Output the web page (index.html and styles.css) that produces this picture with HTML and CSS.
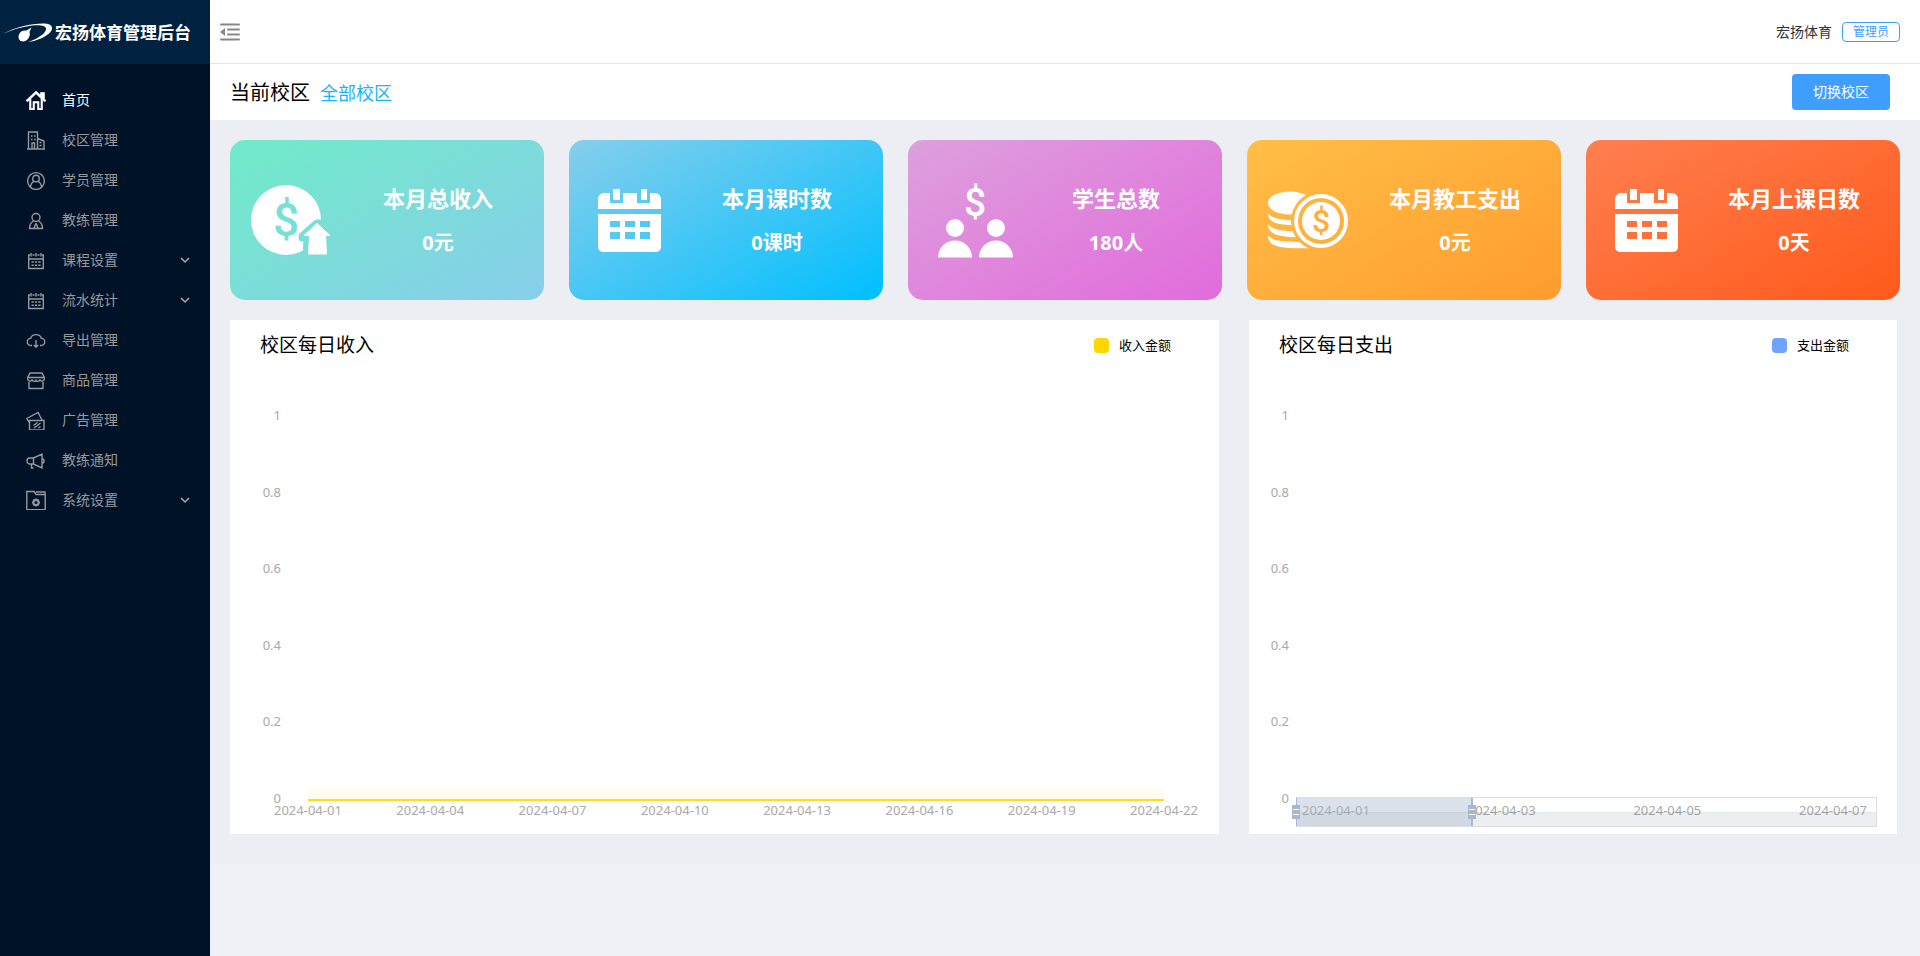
FILE: index.html
```html
<!DOCTYPE html>
<html lang="zh-CN">
<head>
<meta charset="utf-8">
<meta name="viewport" content="width=device-width, initial-scale=1">
<title>宏扬体育管理后台</title>
<link rel="stylesheet" href="styles.css">
</head>
<body>
<svg class="sprite" aria-hidden="true">
  <symbol id="calendar-small" viewBox="0 0 20 20">
    <path d="M4 5H2.700V18.500H17.300V5H16M6.500 5h2M11.500 5h2M5 3v3.500M10 3v3.500M15 3v3.500M3 9h14M5.500 12h2.300M8.900 12h2.300M12.300 12h2.300M5.500 15.300h2.300M8.900 15.300h2.300M12.300 15.300h2.300"/>
  </symbol>
  <symbol id="chevron" viewBox="0 0 10 10">
    <path d="M1 3l4 4 4-4"/>
  </symbol>
  <symbol id="calendar-large" viewBox="0 0 64 64">
    <path d="M6 4h6v10h13V4h14v10h13V4h5a6 6 0 0 1 6 6v10H0V10a6 6 0 0 1 6-6zM15 0h7v11h-7zM43 0h6v11h-6z"/>
    <path fill-rule="evenodd" d="M0 25h63v33a5 5 0 0 1-5 5H5a5 5 0 0 1-5-5zM12 32v6h10v-6zM27 32v6h10v-6zM42 32v6h10v-6zM12 43v7h10v-7zM27 43v7h10v-7zM42 43v7h10v-7z"/>
  </symbol>
</svg>
<div class="app">
  <aside class="sidebar">
    <div class="brand">
      <svg class="brand-logo" viewBox="0 0 50 20" aria-hidden="true">
        <path fill="#fff" d="M0 11C12 4 30 0 42 0.500C50 1 51 6 46 10.500C41 15 33 18 25 19C34 16 42 11 43 6.500C44 2.500 37 1.500 29 2.500C18 4 8 7 0 11z"/>
        <path fill="#fff" d="M16 11.500C17 8.500 20 7 23.500 7.500L28.500 4.500L26.500 9C28 13.500 24 18.500 20 18.500C16.500 18.500 14.500 15 16 11.500z"/>
      </svg>
      <h1 class="brand-name">宏扬体育管理后台</h1>
    </div>
    <nav class="menu">
      <a class="menu-item active" href="#">
        <svg class="menu-icon solid" viewBox="0 0 20 20"><path fill-rule="evenodd" d="M10 1L0 10.500l1.500 1.300L3.500 10v10h5v-7h3v7h5V10l2 1.800L20 10.500l-1.500-1.500V2.500h-4V5zM10 3.800l5 4.800V18.500H13v-7H7v7H5V8.600z"/></svg>
        <span>首页</span></a>
      <a class="menu-item" href="#">
        <svg class="menu-icon" viewBox="0 0 20 20"><path d="M1 19h18M2.500 19V2h9v17M11.500 8.500l6.500 2.500v8M5 6h1.500M8 6h1.500M5 9.500h1.500M8 9.500h1.500M6 19v-6h2.500v6M13.500 12.500h2M13.500 15.500h2"/></svg>
        <span>校区管理</span></a>
      <a class="menu-item" href="#">
        <svg class="menu-icon" viewBox="0 0 20 20"><circle cx="10" cy="11" r="8.400"/><circle cx="10" cy="8.500" r="3.300"/><path d="M4.500 17c.3-3 1.600-5 3.700-5.700M15.500 17c-.3-3-1.600-5-3.700-5.700"/></svg>
        <span>学员管理</span></a>
      <a class="menu-item" href="#">
        <svg class="menu-icon" viewBox="0 0 20 20"><circle cx="10" cy="7.500" r="4"/><path d="M7.500 11C5 12.500 3.500 15 3.500 18.500h13c0-3.500-1.500-6-4-7.500M8.200 18l1.300-4h1l1.300 4"/></svg>
        <span>教练管理</span></a>
      <button class="menu-item" type="button">
        <svg class="menu-icon"><use href="#calendar-small"/></svg>
        <span>课程设置</span>
        <svg class="menu-arrow"><use href="#chevron"/></svg></button>
      <button class="menu-item" type="button">
        <svg class="menu-icon"><use href="#calendar-small"/></svg>
        <span>流水统计</span>
        <svg class="menu-arrow"><use href="#chevron"/></svg></button>
      <a class="menu-item" href="#">
        <svg class="menu-icon" viewBox="0 0 20 20"><path d="M6 15.500H5a3.600 3.600 0 0 1-.3-7.200a5.500 5 0 0 1 10.600 0A3.600 3.600 0 0 1 15 15.500h-1M10 10v7M7.800 15l2.200 2.200 2.200-2.200"/></svg>
        <span>导出管理</span></a>
      <a class="menu-item" href="#">
        <svg class="menu-icon" viewBox="0 0 20 20"><path d="M4 3h12l2.300 4.500v1.500c0 2.500-4 3-4.300.5c-.5 2.500-4 2.500-4 0c0 2.500-3.500 2.500-4 0c-.3 2.500-4.300 2-4.300-.5V7.500zM2 7.500h16M3 12V18.500h14v-6.500"/></svg>
        <span>商品管理</span></a>
      <a class="menu-item" href="#">
        <svg class="menu-icon" viewBox="0 0 20 20"><path d="M3.500 10.500h14.500V20H3.500zM3.500 13L.8 8.500L12 2.500L16 10M7.500 15.500l4-3M8 18l6.500-5M12.500 18l2-1.500"/></svg>
        <span>广告管理</span></a>
      <a class="menu-item" href="#">
        <svg class="menu-icon" viewBox="0 0 20 20"><path d="M7.500 8H3.500a2.500 3 0 0 0 0 6h4l8.500 4V4zM7.500 8v6M16.500 9c2 0 2 4 0 4M5.500 14v4h2"/></svg>
        <span>教练通知</span></a>
      <button class="menu-item" type="button">
        <svg class="menu-icon" viewBox="0 0 20 20"><path d="M.8 1.500H8l2 3h9.200v15.200H.8zM10 2h9V4.500"/><circle cx="10" cy="12.500" r="2.500" stroke-width="1.800"/><path stroke-width="1.800" d="M10 8.500v1.500M10 15v1.500M6 12.500h1.500M12.500 12.500H14M7.200 9.700l1 1M11.800 14.300l1 1M7.200 15.300l1-1M11.800 10.700l1-1"/></svg>
        <span>系统设置</span>
        <svg class="menu-arrow"><use href="#chevron"/></svg></button>
    </nav>
  </aside>

  <div class="page">
    <header class="topbar">
      <button class="fold" type="button" aria-label="收起菜单">
        <svg viewBox="0 0 20 18"><path d="M1 1.500h18M8 6.500h11M8 11.500h11M1 16.500h18"/><path class="fold-arrow" d="M0 9l5-4v8z"/></svg>
      </button>
      <div class="account"><span>宏扬体育</span><span class="role">管理员</span></div>
    </header>
    <section class="campus">
      <div class="campus-label"><span>当前校区</span><a class="campus-name" href="#">全部校区</a></div>
      <button class="switch" type="button">切换校区</button>
    </section>

    <main class="content">
      <section class="cards">
        <article class="card income">
          <svg class="card-icon" viewBox="0 0 82 82">
            <mask id="coin"><rect width="82" height="82" fill="#fff"/><path d="M67 44L52 57v2h5l-1 22h26V44z" fill="#000" stroke="#000" stroke-width="7" stroke-linejoin="round"/></mask>
            <circle cx="36" cy="41" r="35" mask="url(#coin)"/>
            <text class="coin-mark" x="36" y="57" font-size="46">$</text>
            <path d="M67 44.500L80 56.500h-4.500l1 18.500H58.500l1-18.500H54z" stroke="#fff" stroke-linejoin="round"/>
          </svg>
          <div class="card-text"><h2>本月总收入</h2><p>0元</p></div>
        </article>
        <article class="card lessons">
          <svg class="card-icon" viewBox="-9 -10 82 82"><use href="#calendar-large" width="64" height="64"/></svg>
          <div class="card-text"><h2>本月课时数</h2><p>0课时</p></div>
        </article>
        <article class="card students">
          <svg class="card-icon" viewBox="0 0 82 82">
            <text x="47" y="37" font-size="39">$</text>
            <circle cx="27" cy="49" r="9"/><circle cx="68" cy="49" r="9"/>
            <path d="M10 78.500a17 17 0 0 1 34 0zM51 78.500a17 17 0 0 1 34 0z"/>
          </svg>
          <div class="card-text"><h2>学生总数</h2><p>180人</p></div>
        </article>
        <article class="card payroll">
          <svg class="card-icon" viewBox="0 0 82 82">
            <mask id="stack"><rect width="82" height="82" fill="#fff"/><circle cx="54" cy="42" r="30" fill="#000"/></mask>
            <g mask="url(#stack)">
              <ellipse cx="23" cy="24" rx="22" ry="11.500"/>
              <path d="M1 34C5 40 14 42 48 41V46C15 47 1 46 1 34zM1 45C5 51 14 53 48 52V58C15 59 1 57 1 45zM1 56C5 62 14 63 48 63V69C12 70 1 68 1 56z"/>
            </g>
            <circle cx="54" cy="42" r="25" fill="none" stroke="#fff" stroke-width="4"/>
            <circle cx="54" cy="42" r="19"/>
            <text class="coin-mark" x="54" y="53" font-size="32">$</text>
          </svg>
          <div class="card-text"><h2>本月教工支出</h2><p>0元</p></div>
        </article>
        <article class="card days">
          <svg class="card-icon" viewBox="-9 -10 82 82"><use href="#calendar-large" width="64" height="64"/></svg>
          <div class="card-text"><h2>本月上课日数</h2><p>0天</p></div>
        </article>
      </section>

      <section class="panels">
        <article class="panel wide">
          <header class="panel-head"><h2>校区每日收入</h2><div class="legend"><i class="swatch gold"></i>收入金额</div></header>
          <div class="chart">
            <div class="y-axis"><span>1</span><span>0.8</span><span>0.6</span><span>0.4</span><span>0.2</span><span>0</span></div>
            <div class="plot">
              <div class="series"></div>
              <div class="x-axis"><span>2024-04-01</span><span>2024-04-04</span><span>2024-04-07</span><span>2024-04-10</span><span>2024-04-13</span><span>2024-04-16</span><span>2024-04-19</span><span>2024-04-22</span></div>
            </div>
          </div>
        </article>
        <article class="panel narrow">
          <header class="panel-head"><h2>校区每日支出</h2><div class="legend"><i class="swatch blue"></i>支出金额</div></header>
          <div class="chart">
            <div class="y-axis"><span>1</span><span>0.8</span><span>0.6</span><span>0.4</span><span>0.2</span><span>0</span></div>
            <div class="plot">
              <div class="x-axis"><span>2024-04-01</span><span>2024-04-03</span><span>2024-04-05</span><span>2024-04-07</span></div>
              <div class="zoom-bar"><div class="zoom-range" style="width:30%"><i class="handle start"></i><i class="handle end"></i></div></div>
            </div>
          </div>
        </article>
      </section>
    </main>
  </div>
</div>
</body>
</html>
```

FILE: styles.css
```css
* { box-sizing: border-box; }
body {
  margin: 0;
  background: #f0f1f6;
  color: #000;
  font-family: "Noto Sans", "Noto Sans CJK SC", sans-serif;
  font-size: 14px;
  line-height: 20px;
}
h1, h2, p { margin: 0; }
a { text-decoration: none; }
button { font: inherit; border: 0; cursor: pointer; }
.sprite { display: none; }

.app { display: flex; min-height: 100vh; }
.sidebar { flex: 0 0 210px; background: #001228; }
.brand {
  display: flex;
  align-items: center;
  gap: 2px;
  height: 64px;
  padding: 2px 0 0 3px;
  background: #002140;
}
.brand-logo { width: 50px; height: 20px; }
.brand-name { color: #fff; font-size: 17px; font-weight: 700; line-height: 24px; white-space: nowrap; }

.menu { padding-top: 16px; }
.menu-item {
  display: flex;
  align-items: center;
  gap: 16px;
  width: 100%;
  height: 40px;
  padding: 0 20px 0 26px;
  background: none;
  color: #999;
  text-align: left;
}
.menu-item.active { color: #fff; }
.menu-icon {
  width: 20px;
  height: 20px;
  fill: none;
  stroke: currentColor;
  stroke-width: 1.400;
}
.menu-icon.solid { fill: currentColor; stroke: currentColor; stroke-width: 0.600; }
.menu-arrow {
  width: 10px;
  height: 10px;
  margin-left: auto;
  fill: none;
  stroke: #aaa;
  stroke-width: 1.500;
}

.page { flex: 1; min-width: 0; }
.topbar {
  display: flex;
  align-items: center;
  justify-content: space-between;
  height: 64px;
  padding: 0 20px 0 10px;
  background: #fff;
  border-bottom: 1px solid #e6e6e6;
}
.fold { padding: 0; background: none; height: 18px; }
.fold svg { display: block; width: 20px; height: 18px; fill: none; stroke: #888; stroke-width: 2; stroke-linecap: round; }
.fold .fold-arrow { fill: #888; stroke: none; }
.account { display: flex; align-items: center; gap: 10px; color: #333; }
.role {
  padding: 0 10px;
  border: 1px solid #409eff;
  border-radius: 4px;
  color: #409eff;
  font-size: 12px;
  line-height: 18px;
}
.campus {
  display: flex;
  align-items: center;
  justify-content: space-between;
  height: 56px;
  padding: 0 30px 0 20px;
  background: #fff;
}
.campus-label { display: flex; align-items: center; gap: 10px; padding-top: 2px; font-size: 20px; line-height: 28px; }
.campus-name { color: #1ab3ff; font-size: 18px; }
.switch { height: 36px; padding: 0 21px; border-radius: 4px; background: #409eff; color: #fff; }

.content { padding: 20px 20px 30px; background: #edeef3; }
.cards { display: grid; grid-template-columns: repeat(5, 1fr); gap: 25px; }
.card {
  display: flex;
  align-items: center;
  height: 160px;
  padding-left: 20px;
  border-radius: 15px;
  color: #fff;
}
.income { background: linear-gradient(150deg, #70ebc8, #7cdcd9 50%, #87ceeb); }
.lessons { background: linear-gradient(150deg, #87ceeb, #00bfff); }
.students { background: linear-gradient(150deg, #dda0dd, #e26bdc); }
.payroll { background: linear-gradient(150deg, #ffbf47, #ff9c2e); }
.days { background: linear-gradient(150deg, #ff7f50, #ff5a1a); }
.card-icon { flex: 0 0 82px; height: 82px; fill: #fff; overflow: visible; }
.card-icon text { font-family: Roboto, sans-serif; font-weight: 500; text-anchor: middle; }
.income .coin-mark { fill: #79e0d5; }
.payroll .coin-mark { fill: #ffae3a; }
.card-text { display: grid; flex: 1; gap: 15px; padding-top: 1px; text-align: center; line-height: 30px; }
.card-text h2 { font-size: 22px; font-weight: 700; }
.card-text p { font-size: 20px; font-weight: 700; }

.panels { display: flex; gap: 30px; margin: 20px 3px 0 0; }
.panel { min-width: 0; background: #fff; padding-bottom: 18px; }
.wide { flex: 989 1 0; }
.narrow { flex: 648 1 0; }
.panel-head {
  display: flex;
  align-items: center;
  justify-content: space-between;
  height: 50px;
  padding: 0 48px 0 30px;
}
.panel-head h2 { font-size: 19px; font-weight: 400; line-height: 28px; }
.legend { display: flex; align-items: center; gap: 10px; font-size: 13px; }
.swatch { width: 15px; height: 15px; border-radius: 4px; }
.gold { background: #ffd700; }
.blue { background: #6ea3ff; }

.chart { display: flex; height: 446px; padding-top: 39px; color: #a9a9a9; font-size: 13px; line-height: 12px; }
.y-axis {
  display: flex;
  flex-direction: column;
  justify-content: space-between;
  margin-bottom: 12px;
  text-align: right;
}
.wide .y-axis { width: 51px; }
.narrow .y-axis { width: 40px; }
.plot {
  position: relative;
  display: flex;
  flex: 1;
  flex-direction: column;
  justify-content: flex-end;
}
.wide .plot { margin: 0 55px 0 27px; }
.narrow .plot { margin: 0 20px 0 7px; }
.series {
  height: 17px;
  border-bottom: 2px solid #fddc1c;
  background: linear-gradient(to top, #fffbe6, #fff);
}
.x-axis { display: flex; justify-content: space-between; margin-top: 3px; }
.wide .x-axis { margin: 3px -34px 0; }
.narrow .x-axis { padding: 0 10px 0 6px; }

/* Range selector drawn over the date labels */
.zoom-bar {
  position: absolute;
  right: 0;
  bottom: -11px;
  left: 0;
  height: 30px;
  border: 1px solid #ddd;
  background: linear-gradient(transparent 50%, rgba(47, 69, 84, 0.15) 50%, rgba(47, 69, 84, 0.09) 56%);
}
.zoom-range {
  position: relative;
  height: 100%;
  margin-left: -1px;
  min-width: 12px;
  box-sizing: content-box;
  background: rgba(167, 183, 204, 0.4);
  border: solid #acb8d1;
  border-width: 0 2px 0 1px;
}
.handle {
  position: absolute;
  top: 7px;
  width: 8px;
  height: 14px;
  border: 1px solid #a7b7cc;
  background: linear-gradient(#a7b7cc 3px, #fff 3px, #fff 4px, #a7b7cc 4px, #a7b7cc 8px, #fff 8px, #fff 9px, #a7b7cc 9px);
}
.start { left: -5px; }
.end { right: -5px; }
```
